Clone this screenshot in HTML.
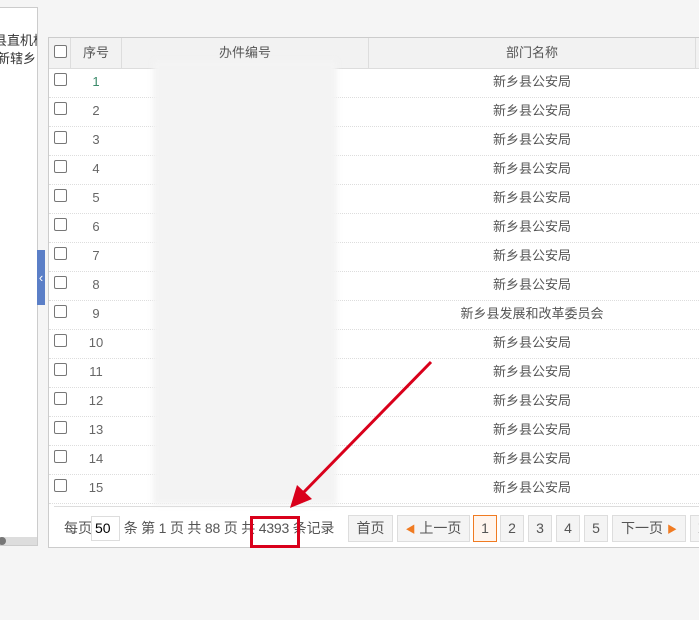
<!DOCTYPE html>
<html><head><meta charset="utf-8"><style>
*{margin:0;padding:0;box-sizing:border-box}
body{width:699px;height:620px;background:#f5f5f5;position:relative;overflow:hidden;font-family:"Liberation Sans","Noto Sans CJK SC",sans-serif;font-size:13px;line-height:15px;color:#555}
.a{position:absolute}
.left{left:-1px;top:7px;width:39px;height:539px;background:#fff;border:1px solid #ccc;overflow:hidden}
.main{left:48px;top:37px;width:660px;height:511px;background:#fff;border:1px solid #ccc}
.cb{width:13px;height:13px;border:1px solid #777;border-radius:2px;background:#fff}
.row{left:0;width:660px;height:29px;border-bottom:1px dotted #ddd}
.btn{height:27px;border:1px solid #ddd;background:#f4f4f4;text-align:center;line-height:25px;font-size:14px;color:#555}
</style></head><body>
<div class="a left">
 <div class="a" style="left:-6px;top:25px;font-size:13px;color:#333;white-space:nowrap">县直机构</div>
 <div class="a" style="left:-3px;top:43px;font-size:13px;color:#333;white-space:nowrap">新辖乡</div>
 <div class="a" style="left:0;top:529px;width:39px;height:8px;background:#ddd"></div>
 <div class="a" style="left:-2px;top:529px;width:8px;height:8px;border-radius:4px;background:#777"></div>
</div>
<div class="a" style="left:37px;top:250px;width:8px;height:55px;background:#5b7fc7;color:#fff;font-size:13px;line-height:55px;text-align:center">‹</div>
<div class="a main">
 <div class="a" style="left:0;top:0;width:660px;height:31px;background:#f2f2f2;border-bottom:1px solid #ddd"></div>
 <div class="a" style="left:21px;top:0;width:1px;height:31px;background:#ddd"></div>
 <div class="a" style="left:72px;top:0;width:1px;height:31px;background:#ddd"></div>
 <div class="a" style="left:319px;top:0;width:1px;height:31px;background:#ddd"></div>
 <div class="a" style="left:646px;top:0;width:1px;height:31px;background:#ddd"></div>
 <div class="a cb" style="left:5px;top:7px"></div>
 <div class="a" style="left:22px;top:7px;width:50px;text-align:center">序号</div>
 <div class="a" style="left:73px;top:7px;width:246px;text-align:center">办件编号</div>
 <div class="a" style="left:320px;top:7px;width:326px;text-align:center">部门名称</div>
 <div id="rows"></div>
 <div class="a" style="left:104px;top:22px;width:184px;height:445px;background:#f3f3f3;filter:blur(3px)"></div>
 <div class="a" style="left:5px;top:468px;width:655px;height:1px;background:#ddd"></div>
 <div class="a" style="left:15px;top:483px;font-size:14px;white-space:nowrap">每页</div>
 <div class="a" style="left:42px;top:478px;width:29px;height:25px;border:1px solid #ddd;color:#000;font-size:14px;padding:4px 0 0 3px">50</div>
 <div class="a" style="left:71px;top:483px;font-size:14px;white-space:nowrap;letter-spacing:-0.2px">&nbsp;条 第 1 页 共 88 页 共 4393 条记录</div>
 <div class="a btn" style="left:299px;top:477px;width:45px">首页</div>
 <div class="a btn" style="left:348px;top:477px;width:73px"><span style="color:#f07b22;font-size:10px">◀</span> 上一页</div>
 <div class="a btn" style="left:424px;top:477px;width:24px;border-color:#f07b22;background:#fff5ee">1</div>
 <div class="a btn" style="left:451px;top:477px;width:24px">2</div>
 <div class="a btn" style="left:479px;top:477px;width:24px">3</div>
 <div class="a btn" style="left:507px;top:477px;width:24px">4</div>
 <div class="a btn" style="left:535px;top:477px;width:24px">5</div>
 <div class="a btn" style="left:563px;top:477px;width:74px">下一页 <span style="color:#f07b22;font-size:10px">▶</span></div>
 <div class="a btn" style="left:641px;top:477px;width:30px">末</div>
</div>
<svg class="a" style="left:0;top:0" width="699" height="620">
 <rect x="251.5" y="517.5" width="47" height="29" fill="none" stroke="#d9001b" stroke-width="3"/>
 <line x1="431" y1="362" x2="302" y2="494" stroke="#d9001b" stroke-width="3"/>
 <polygon points="290,508 297,485 312,499" fill="#d9001b"/>
</svg>
<script>
var d=['新乡县公安局','新乡县公安局','新乡县公安局','新乡县公安局','新乡县公安局','新乡县公安局','新乡县公安局','新乡县公安局','新乡县发展和改革委员会','新乡县公安局','新乡县公安局','新乡县公安局','新乡县公安局','新乡县公安局','新乡县公安局'];
var h='';
for(var i=0;i<15;i++){var t=31+i*29;
h+='<div class="a row" style="top:'+t+'px"></div><div class="a cb" style="left:5px;top:'+(t+4)+'px"></div><div class="a" style="left:22px;top:'+(t+5)+'px;width:50px;text-align:center;color:'+(i==0?'#3a8a6a':'#666')+'">'+(i+1)+'</div><div class="a" style="left:320px;top:'+(t+5)+'px;width:326px;text-align:center">'+d[i]+'</div>';}
document.getElementById('rows').innerHTML=h;
</script>
</body></html>
